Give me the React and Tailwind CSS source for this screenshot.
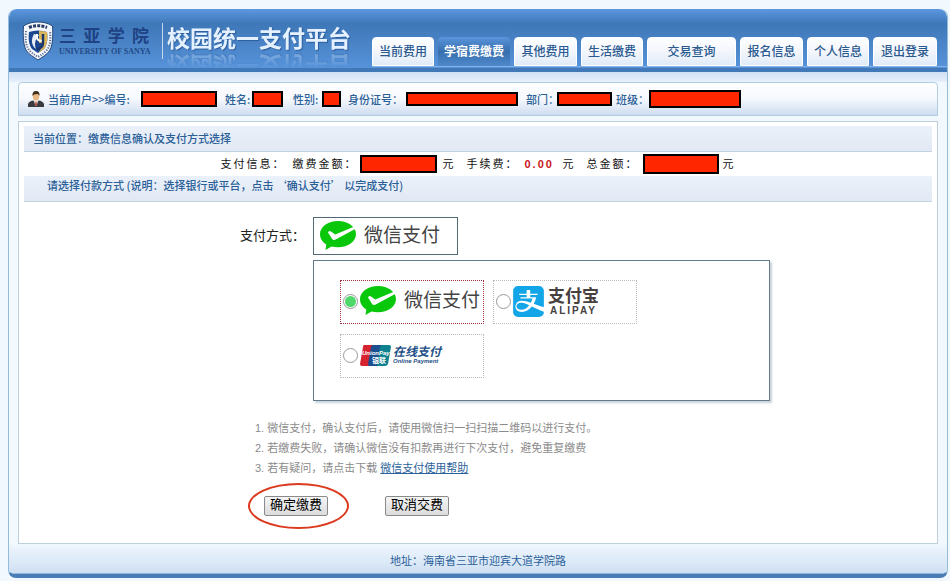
import React, { useState } from 'react';
import { SiAlipay } from 'react-icons/si';

const NAV = [
  { label: '当前费用', width: 'w-[62px]' },
  { label: '学宿费缴费', width: 'w-[72px]', active: true },
  { label: '其他费用', width: 'w-[63px]' },
  { label: '生活缴费', width: 'w-[62px]' },
  { label: '交易查询', width: 'w-[89px]' },
  { label: '报名信息', width: 'w-[63px]' },
  { label: '个人信息', width: 'w-[62px]' },
  { label: '退出登录', width: 'w-[64px]' },
];

const USER_FIELDS = [
  { label: '当前用户>>编号:', labelWidth: 'w-[93px]', box: 'w-[76px] h-4', gap: 'mr-2' },
  { label: '姓名:', labelWidth: 'w-[27px]', box: 'w-[31px] h-4', gap: 'mr-[10px]' },
  { label: '性别:', labelWidth: 'w-[29px]', box: 'w-[19px] h-4', gap: 'mr-[7px]' },
  { label: '身份证号：', labelWidth: 'w-[58px]', box: 'w-[112px] h-[14px]', gap: 'mr-2' },
  { label: '部门：', labelWidth: 'w-[31px]', box: 'w-[55px] h-[14px]', gap: 'mr-1' },
  { label: '班级：', labelWidth: 'w-[33px]', box: 'w-[92px] h-[18px]', gap: '' },
];

function Masked({ className }) {
  return <span className={`inline-block shrink-0 border-2 border-black bg-[#ff2600] ${className}`} />;
}

function SchoolBadge() {
  return (
    <svg viewBox="0 0 32 40" className="h-10 w-8 shrink-0" aria-hidden="true">
      <path d="M16 1C11 1 6 2 1.500 5C1 14 1 23 4 29C7 34 12 36 16 39C20 36 25 34 28 29C31 23 31 14 30.500 5C26 2 21 1 16 1Z" fill="#f4f7fb" stroke="#24477c" strokeWidth="1" />
      <path d="M7 6.500Q16 3 25 6.500" fill="none" stroke="#2b3d66" strokeWidth="3" strokeDasharray="3 1.200" />
      <path d="M4 10C3 19 4 26 8 30C11 33 13 34 16 36C19 34 21 33 24 30C28 26 29 19 28 10" fill="none" stroke="#5b6c90" strokeWidth="2" strokeDasharray="1.200 1.400" />
      <path d="M7 11Q16 8 25 11C26 18 25 24 22 28L16 32L10 28C7 24 6 18 7 11Z" fill="#1a4790" />
      <path d="M17 10Q22 10 25 11C26 18 25 24 22 28L16 32Q20 28 20 22H17Z" fill="#d9b659" />
      <path d="M12 13C9 18 9 24 14 28C12 23 13 19 17 14Z" fill="#e8eef7" />
      <path d="M15 13V17Q16 20.500 20 19.500" fill="none" stroke="#fff" strokeWidth="2" />
      <path d="M21 13V22Q21 27 15 28" fill="none" stroke="#1b366c" strokeWidth="2.400" />
    </svg>
  );
}

function UserIcon() {
  return (
    <svg viewBox="0 0 16 16" className="mr-1 h-4 w-4 shrink-0" aria-hidden="true">
      <path d="M0 16V13Q1 10 5 9.500L8 11L11 9.500Q15 10 16 13V16Z" fill="#3b3b3f" />
      <path d="M6 9H10L9 14L8 15L7 14Z" fill="#fff" />
      <path d="M7.500 10.500H8.500L9 14L8 15L7 14Z" fill="#b5382c" />
      <ellipse cx="8" cy="5.500" rx="3.200" ry="4.200" fill="#e9b984" />
      <path d="M4.500 5Q4 0 8 0Q12 0 11.500 5Q11 3 9 3Q5.500 3 4.500 5Z" fill="#40301f" />
    </svg>
  );
}

function WechatPayLogo() {
  return (
    <span className="flex items-center gap-2">
      <svg viewBox="0 0 36 30" className="h-[30px] w-9 shrink-0" aria-hidden="true">
        <path d="M18 0C8 0 0 5.700 0 13C0 17.700 2.400 21 6.300 23.400L5.500 29L11.500 25.600Q14.500 26.300 18 26.300C28 26.300 36 20.500 36 13C36 5.700 28 0 18 0Z" fill="#09c70b" />
        <path d="M8 11.500Q9.200 9.300 11 10.500L15.300 13.500L34.500 5.500L36 7.500L15.700 18.600Q13.300 19.800 12 17.800Z" fill="#fff" />
      </svg>
      <span className="text-[19px] leading-6 text-[#444]">微信支付</span>
    </span>
  );
}

function AlipayLogo() {
  return (
    <span className="flex items-center gap-1">
      <SiAlipay className="h-[31px] w-[31px] shrink-0 text-[#12a5e8]" aria-hidden="true" />
      <span className="flex flex-col items-center pt-[2px] text-[#46403e]">
        <span className="text-[17px] leading-[18px] font-bold">支付宝</span>
        <span className="text-[10px] leading-[10px] font-bold tracking-[2px]">ALIPAY</span>
      </span>
    </span>
  );
}

function UnionPayLogo() {
  return (
    <span className="flex items-center gap-[2px]">
      <svg viewBox="0 0 31 21" className="h-[21px] w-[31px] shrink-0" aria-hidden="true">
        <path d="M4 0H13L9 21H2Q0 21 0 19L3 2Q3 0 4 0Z" fill="#d6232f" />
        <path d="M13 0H23L19 21H9Q8 20 8 19L11 2Q12 0 13 0Z" fill="#1c4f8f" />
        <path d="M22 0H29Q31 0 31 2L28 19Q27 21 25 21H17L20 2Q21 0 22 0Z" fill="#0f8291" />
        <text x="2" y="10" fontSize="6" fontStyle="italic" fontWeight="700" fill="#fff">UnionPay</text>
        <text x="12" y="18" fontSize="7" fontWeight="700" fill="#fff">银联</text>
      </svg>
      <span className="flex flex-col text-[#1d4f87] italic">
        <span className="text-[12px] leading-3 font-bold">在线支付</span>
        <span className="text-[6px] leading-[7px] font-bold">Online Payment</span>
      </span>
    </span>
  );
}

const METHODS = [
  { id: 'wechat', name: '微信支付', Logo: WechatPayLogo },
  { id: 'alipay', name: '支付宝', Logo: AlipayLogo },
  { id: 'unionpay', name: '银联在线支付', Logo: UnionPayLogo },
];

function Header() {
  return (
    <header className="flex h-[63px] items-start rounded-t-lg border-b-4 border-[#4179b8] bg-linear-to-b from-[#5c98e0] via-[#3f78b8] via-25% to-[#5793da] pl-[13px]">
      <div className="flex items-center pt-3">
        <SchoolBadge />
        <div className="ml-[5px] w-[90px]">
          <div className="flex justify-between text-[17px] leading-5 font-bold text-[#1f4285]">
            <span>三</span>
            <span>亚</span>
            <span>学</span>
            <span>院</span>
          </div>
          <p className="font-['Liberation_Serif',serif] text-[8px] leading-[9px] font-bold whitespace-nowrap text-[#234a86]">UNIVERSITY OF SANYA</p>
        </div>
        <div className="mr-1 ml-[13px] h-9 w-px bg-[#c3d9f2]" />
        <h1 className="pb-1 text-[23px] leading-6 font-bold whitespace-nowrap text-[#e6f1ff] [-webkit-box-reflect:below_-6px_linear-gradient(transparent_30%,rgba(255,255,255,0.4))] text-shadow-[1px_1px_1px_#2a5c9c]">
          校园统一支付平台
        </h1>
      </div>
      <nav className="ml-auto flex gap-1 border-b border-[#83b2e6] pt-7 pr-[10px]">
        {NAV.map((item) => (
          <a
            key={item.label}
            href="#"
            className={`flex h-[29px] items-center justify-center rounded-t-sm text-[12px] whitespace-nowrap ${item.width} ${
              item.active
                ? 'bg-linear-to-b from-[#5a95dc] via-[#376fae] to-[#4e89cb] font-bold text-white'
                : 'border border-white bg-linear-to-b from-[#fdfeff] via-[#f3f6fc] to-[#e0ebf8] font-medium text-[#29598f]'
            }`}
          >
            {item.label}
          </a>
        ))}
      </nav>
    </header>
  );
}

export default function App() {
  const [method, setMethod] = useState('wechat');
  const Current = METHODS.find((m) => m.id === method).Logo;

  return (
    <div className="min-h-screen bg-[#f1f8fe] pt-[9px] pr-[2px] pb-1 pl-2 font-['Liberation_Sans','Noto_Sans_CJK_SC',sans-serif] text-[11px] leading-4 text-[#2b5f98]">
      <div className="overflow-hidden rounded-lg border-x border-b-4 border-x-[#94bcd8] border-b-[#4a7db5] bg-[#f1f9fe]">
        <Header />
        <div className="h-[10px] bg-linear-to-b from-[#cfdff5] to-[#e6f0fb]" />

        <div className="px-[9px]">
          <section className="flex h-[34px] items-center rounded-t-sm border border-[#b3cde0] bg-linear-to-b from-white via-[#f5f8fd] to-[#cfddf0] pl-[9px] font-['Noto_Sans_CJK_SC',sans-serif] font-medium whitespace-nowrap">
            <UserIcon />
            {USER_FIELDS.map((f) => (
              <span key={f.label} className={`flex shrink-0 items-center ${f.gap}`}>
                <span className={f.labelWidth}>{f.label}</span>
                <Masked className={f.box} />
              </span>
            ))}
          </section>

          <main className="mt-[5px] border border-[#bccfdb] bg-white px-[5px] pt-1 pb-[14px]">
            <h2 className="flex h-[26px] items-center border-b border-[#c3d2e0] bg-linear-to-b from-[#ebf1fa] to-[#e2e9f4] pl-[9px] font-medium">
              当前位置：缴费信息确认及支付方式选择
            </h2>
            <div className="flex h-6 items-center justify-center tracking-[2px] whitespace-nowrap text-[#111]">
              <span className="w-[72px]">支付信息：</span>
              <span className="w-[67px]">缴费金额：</span>
              <Masked className="h-[18px] w-[77px]" />
              <span className="ml-[6px] w-6">元</span>
              <span className="w-[58px]">手续费：</span>
              <strong className="w-[38px] text-[#c8141c]">0.00</strong>
              <span className="w-6">元</span>
              <span className="w-14">总金额：</span>
              <Masked className="h-5 w-[76px]" />
              <span className="ml-1">元</span>
            </div>
            <h3 className="flex h-[26px] items-start border-b border-[#c3d2e0] bg-linear-to-b from-[#ebf1fa] to-[#e2e9f4] pt-px pl-[23px] font-['Noto_Sans_CJK_SC',sans-serif] font-medium">
              请选择付款方式 (说明：选择银行或平台，点击 ‘确认支付’ 以完成支付)
            </h3>

            <form className="pt-[15px] pl-[216px]" onSubmit={(e) => e.preventDefault()}>
              <div className="flex items-center">
                <span id="method-label" className="w-[73px] text-[13px] text-[#222]">支付方式：</span>
                <button type="button" aria-labelledby="method-label" className="flex h-[38px] w-[145px] items-center border border-[#526a78] bg-white pl-[6px]">
                  <Current />
                </button>
              </div>

              <fieldset aria-labelledby="method-label" className="mt-[5px] ml-[73px] flex h-[141px] w-[457px] flex-wrap content-start gap-x-[9px] gap-y-[10px] border border-[#617b8e] bg-white pt-[19px] pl-[26px] shadow-[2px_2px_2px_#c9d3da]">
                {METHODS.map(({ id, name, Logo }) => (
                  <label
                    key={id}
                    className={`flex h-[44px] w-[144px] items-center border border-dotted pb-[2px] pl-[2px] ${method === id ? 'border-[#a03040]' : 'border-[#bbb]'}`}
                  >
                    <input
                      type="radio"
                      name="method"
                      aria-label={name}
                      checked={method === id}
                      onChange={() => setMethod(id)}
                      className="mr-[2px] h-[15px] w-[15px] shrink-0 appearance-none rounded-full border border-[#999] bg-white bg-clip-content p-px checked:bg-[#4fd96a]"
                    />
                    <Logo />
                  </label>
                ))}
              </fieldset>

              <ol className="mt-[17px] ml-[15px] text-[11px] leading-5 text-[#8b8b8b]">
                <li>1. 微信支付，确认支付后，请使用微信扫一扫扫描二维码以进行支付。</li>
                <li>2. 若缴费失败，请确认微信没有扣款再进行下次支付，避免重复缴费</li>
                <li>
                  3. 若有疑问，请点击下载 <a href="#" className="text-[#2b6299] underline">微信支付使用帮助</a>
                </li>
              </ol>

              <div className="mt-[5px] ml-2 flex items-center gap-9 text-[13px]">
                <div className="flex h-[46px] w-[101px] items-center rounded-[50%] border-2 border-[#dc3a1e] pl-[14px]">
                  <button type="submit" className="h-5 w-16 rounded-[2px] border border-[#8a8a8a] bg-linear-to-b from-[#f5f5f5] to-[#dcdcdc] pb-[2px] leading-4 whitespace-nowrap text-black">确定缴费</button>
                </div>
                <button type="button" className="h-5 w-16 rounded-[2px] border border-[#8a8a8a] bg-linear-to-b from-[#f5f5f5] to-[#dcdcdc] pb-[2px] leading-4 whitespace-nowrap text-black">取消交费</button>
              </div>
            </form>
          </main>
        </div>

        <footer className="flex h-[30px] items-center justify-center border-b border-[#8fb6dc] bg-linear-to-b from-[#f0f7fe] to-[#cfe0f3] pt-1">
          地址：海南省三亚市迎宾大道学院路
        </footer>
      </div>
    </div>
  );
}
